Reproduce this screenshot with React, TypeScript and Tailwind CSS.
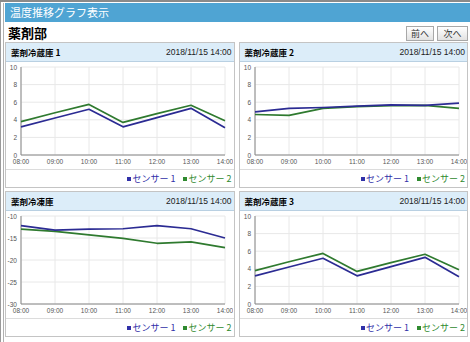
import React from 'react';

type Chart = {
  title: string;
  min: number;
  max: number;
  step: number;
  s1: number[];
  s2: number[];
};

const hours = ['08:00', '09:00', '10:00', '11:00', '12:00', '13:00', '14:00'];

const charts: Chart[] = [
  {
    title: '薬剤冷蔵庫 1',
    min: 0,
    max: 10,
    step: 2,
    s1: [3.2, 4.2, 5.2, 3.2, 4.25, 5.3, 3.1],
    s2: [3.8, 4.8, 5.75, 3.7, 4.7, 5.65, 3.9],
  },
  {
    title: '薬剤冷蔵庫 2',
    min: 0,
    max: 10,
    step: 2,
    s1: [4.9, 5.3, 5.4, 5.55, 5.7, 5.65, 5.9],
    s2: [4.6, 4.5, 5.3, 5.5, 5.6, 5.65, 5.3],
  },
  {
    title: '薬剤冷凍庫',
    min: -30,
    max: -10,
    step: 5,
    s1: [-12.2, -13.2, -13.0, -12.9, -12.2, -12.9, -15.0],
    s2: [-13.0, -13.5, -14.3, -15.1, -16.2, -15.9, -17.2],
  },
  {
    title: '薬剤冷蔵庫 3',
    min: 0,
    max: 10,
    step: 2,
    s1: [3.2, 4.2, 5.2, 3.2, 4.25, 5.3, 3.1],
    s2: [3.8, 4.8, 5.75, 3.7, 4.7, 5.65, 3.9],
  },
];

const LEFT = 15;
const STEP_X = 34;
const TOP = 5;
const BOTTOM = 93;

function LineChart({ c }: { c: Chart }) {
  const y = (v: number) => BOTTOM - ((v - c.min) / (c.max - c.min)) * (BOTTOM - TOP);
  const ticks: number[] = [];
  for (let v = c.min; v <= c.max; v += c.step) ticks.push(v);
  const pts = (d: number[]) => d.map((v, i) => `${LEFT + i * STEP_X},${y(v)}`).join(' ');
  const right = LEFT + STEP_X * 6;

  return (
    <svg width="227" height="107" className="block" style={{ fontFamily: '"Liberation Sans", Arial, sans-serif' }}>
      {/* grid */}
      {ticks.map((t) => (
        <line key={t} x1={LEFT} x2={right} y1={y(t)} y2={y(t)} stroke="#e8e8e8" strokeWidth="1" />
      ))}
      {hours.map((h, i) => (
        <line key={h} x1={LEFT + i * STEP_X} x2={LEFT + i * STEP_X} y1={TOP} y2={BOTTOM} stroke="#e8e8e8" strokeWidth="1" />
      ))}
      {/* axes */}
      <line x1={LEFT} x2={LEFT} y1={TOP} y2={BOTTOM} stroke="#888" strokeWidth="1" />
      <line x1={LEFT} x2={right} y1={BOTTOM} y2={BOTTOM} stroke="#888" strokeWidth="1" />
      {ticks.map((t) => (
        <text key={t} x={LEFT - 4} y={y(t) + 2.5} fontSize="6.5" fill="#555" textAnchor="end">
          {t}
        </text>
      ))}
      {hours.map((h, i) => (
        <text key={h} x={LEFT + i * STEP_X} y={102} fontSize="6.5" fill="#555" textAnchor="middle">
          {h}
        </text>
      ))}
      <polyline points={pts(c.s2)} fill="none" stroke="#2f7a2f" strokeWidth="1.7" strokeLinejoin="round" />
      <polyline points={pts(c.s1)} fill="none" stroke="#2b2b93" strokeWidth="1.7" strokeLinejoin="round" />
    </svg>
  );
}

function Panel({ c }: { c: Chart }) {
  return (
    <div className="border border-[#c4c4c4] bg-white">
      {/* Panel header */}
      <div className="h-[19px] flex items-center justify-between pl-[5px] pr-[2px] bg-[#dcedf9] border-b border-[#b9d0e2]">
        <span className="text-[8.5px] font-bold text-black">{c.title}</span>
        <span className="text-[8.5px] text-[#222]" style={{ fontFamily: '"Liberation Sans", Arial, sans-serif' }}>
          2018/11/15 14:00
        </span>
      </div>
      <LineChart c={c} />
      {/* Legend */}
      <div className="h-[18px] border-t border-[#dcdcdc] flex items-center justify-end gap-[8px] pr-[2px] text-[9px]">
        <span className="text-[#3030a8] flex items-center">
          <span className="inline-block w-[4px] h-[4px] bg-[#3030a8] mr-[1px]" />
          センサー 1
        </span>
        <span className="text-[#2f8a2f] flex items-center">
          <span className="inline-block w-[4px] h-[4px] bg-[#2f8a2f] mr-[1px]" />
          センサー 2
        </span>
      </div>
    </div>
  );
}

export default function App() {
  return (
    <div
      className="w-[470px] h-[342px] overflow-hidden bg-white border-t-2 border-[#8a8a8a]"
      style={{ fontFamily: '"Noto Sans CJK JP", "Liberation Sans", sans-serif' }}
    >
      <div className="h-full border-l border-[#9a9a9a] pl-[2px] pt-px">
        <div className="h-full border-l border-[#b0b0b0] pl-px">
          {/* Title bar */}
          <div className="h-[19px] bg-[#4fa4d3] flex items-center px-[5px] text-white text-[11px] leading-none">
            温度推移グラフ表示
          </div>

          {/* Section header */}
          <div className="h-[20px] flex items-center justify-between pl-[3px] pr-[2px]">
            <span className="text-[13px] font-bold leading-none text-black">薬剤部</span>
            <div className="flex gap-[3px] pt-[2px]">
              <button className="h-[15px] w-[28px] border border-[#a8a8a8] bg-gradient-to-b from-white to-[#e2e2e2] text-[9px] leading-none text-[#333]">
                前へ
              </button>
              <button className="h-[15px] w-[31px] border border-[#a8a8a8] bg-gradient-to-b from-white to-[#e2e2e2] text-[9px] leading-none text-[#333]">
                次へ
              </button>
            </div>
          </div>

          {/* Charts */}
          <div className="grid grid-cols-2 gap-x-[4px] gap-y-[3px] pr-[2px]">
            {charts.map((c) => (
              <Panel key={c.title} c={c} />
            ))}
          </div>
        </div>
      </div>
    </div>
  );
}
